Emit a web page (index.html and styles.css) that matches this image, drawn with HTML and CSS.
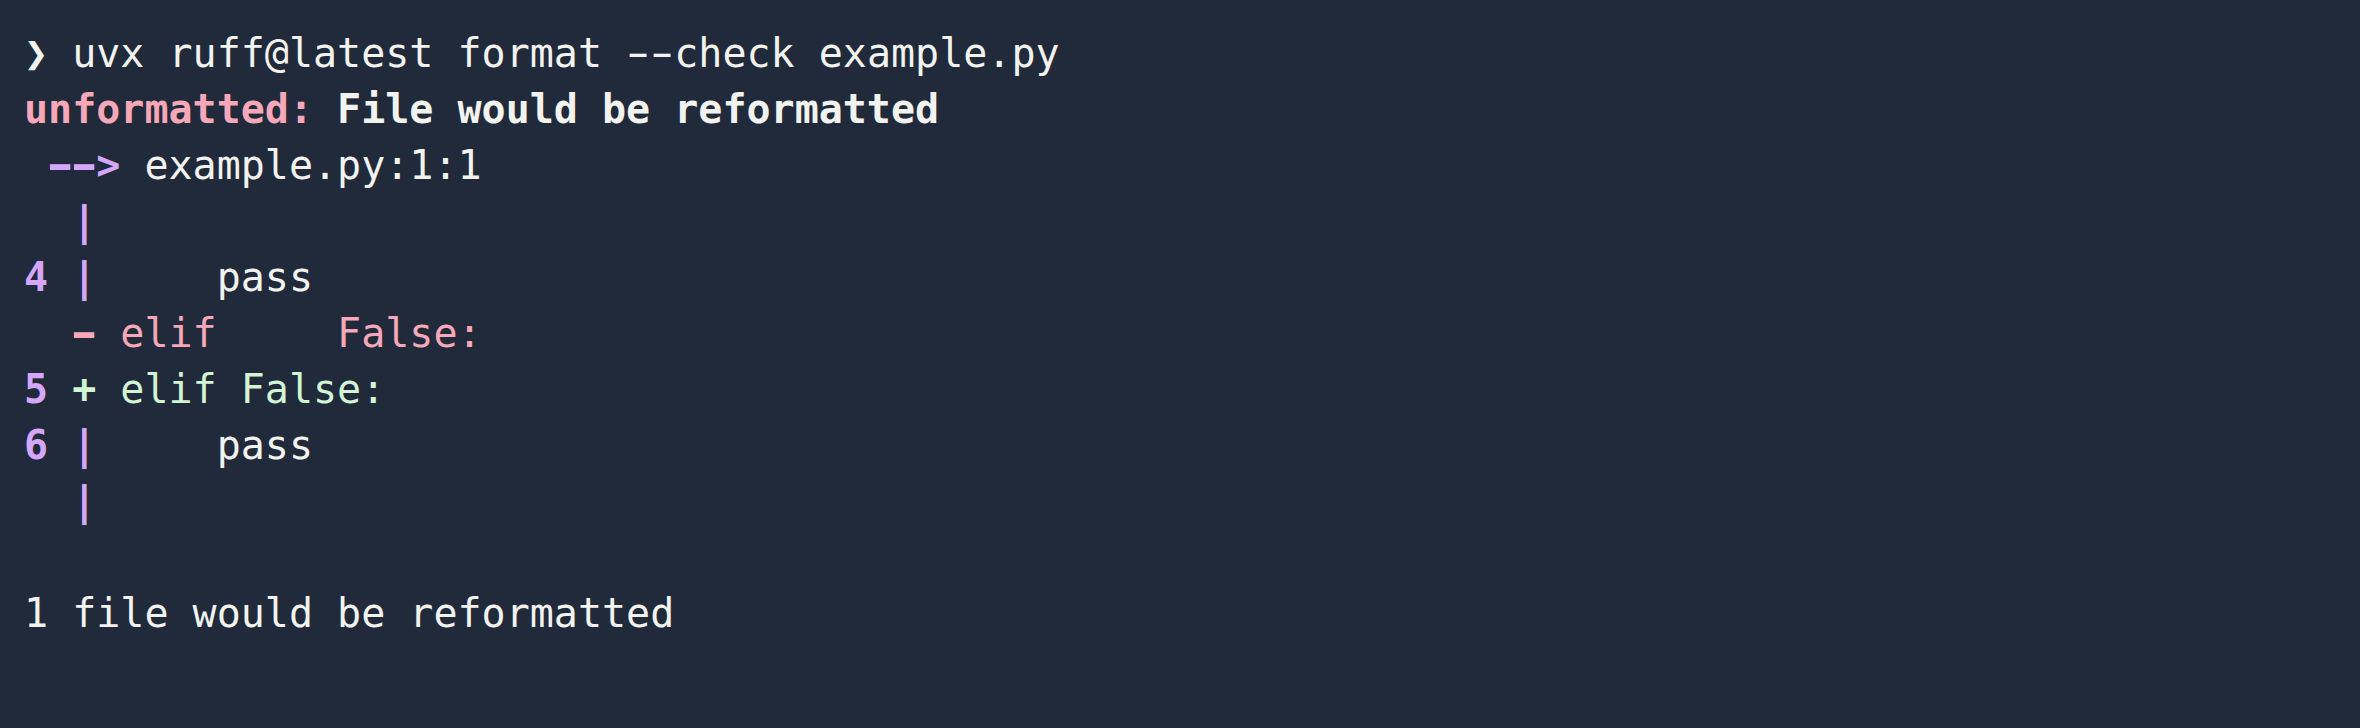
FILE: index.html
```html
<!DOCTYPE html>
<html>
<head>
<meta charset="utf-8">
<link rel="stylesheet" href="styles.css">
</head>
<body>
<div class="term">
<pre class="out"><span class="prompt">❯</span> uvx ruff@latest format <span class="dash">-</span><span class="dash">-</span>check example.py
<span class="err">unformatted:</span><span class="b"> File would be reformatted</span>
<span class="pb"> <span class="dash">-</span><span class="dash">-</span>&gt;</span> example.py:1:1
<span class="pb">  |</span>
<span class="pb">4</span> <span class="pb">|</span>     pass
  <span class="del b"><span class="dash">-</span></span><span class="del"> elif     False:</span>
<span class="pb">5</span> <span class="add b">+</span><span class="add"> elif False:</span>
<span class="pb">6</span> <span class="pb">|</span>     pass
<span class="pb">  |</span>

1 file would be reformatted</pre>
</div>
</body>
</html>
```
FILE: styles.css
```css
html, body {
  margin: 0;
  padding: 0;
  background: #202a3a;
}
.term {
  width: 2360px;
  height: 728px;
  box-sizing: border-box;
  padding: 25px 24px;
  background: #202a3a;
}
.out {
  margin: 0;
  font-family: "DejaVu Sans Mono", monospace;
  font-size: 40px;
  line-height: 56px;
  color: #f2f3ee;
}
.dash {
  display: inline-block;
  transform: scaleX(1.65);
}
.prompt { font-weight: bold; }
.b { font-weight: bold; }
.err { color: #f6a8b8; font-weight: bold; }
.p { color: #d5a7fa; }
.pb { color: #d5a7fa; font-weight: bold; }
.del { color: #f6a8b8; }
.add { color: #d2f5d4; }
```
